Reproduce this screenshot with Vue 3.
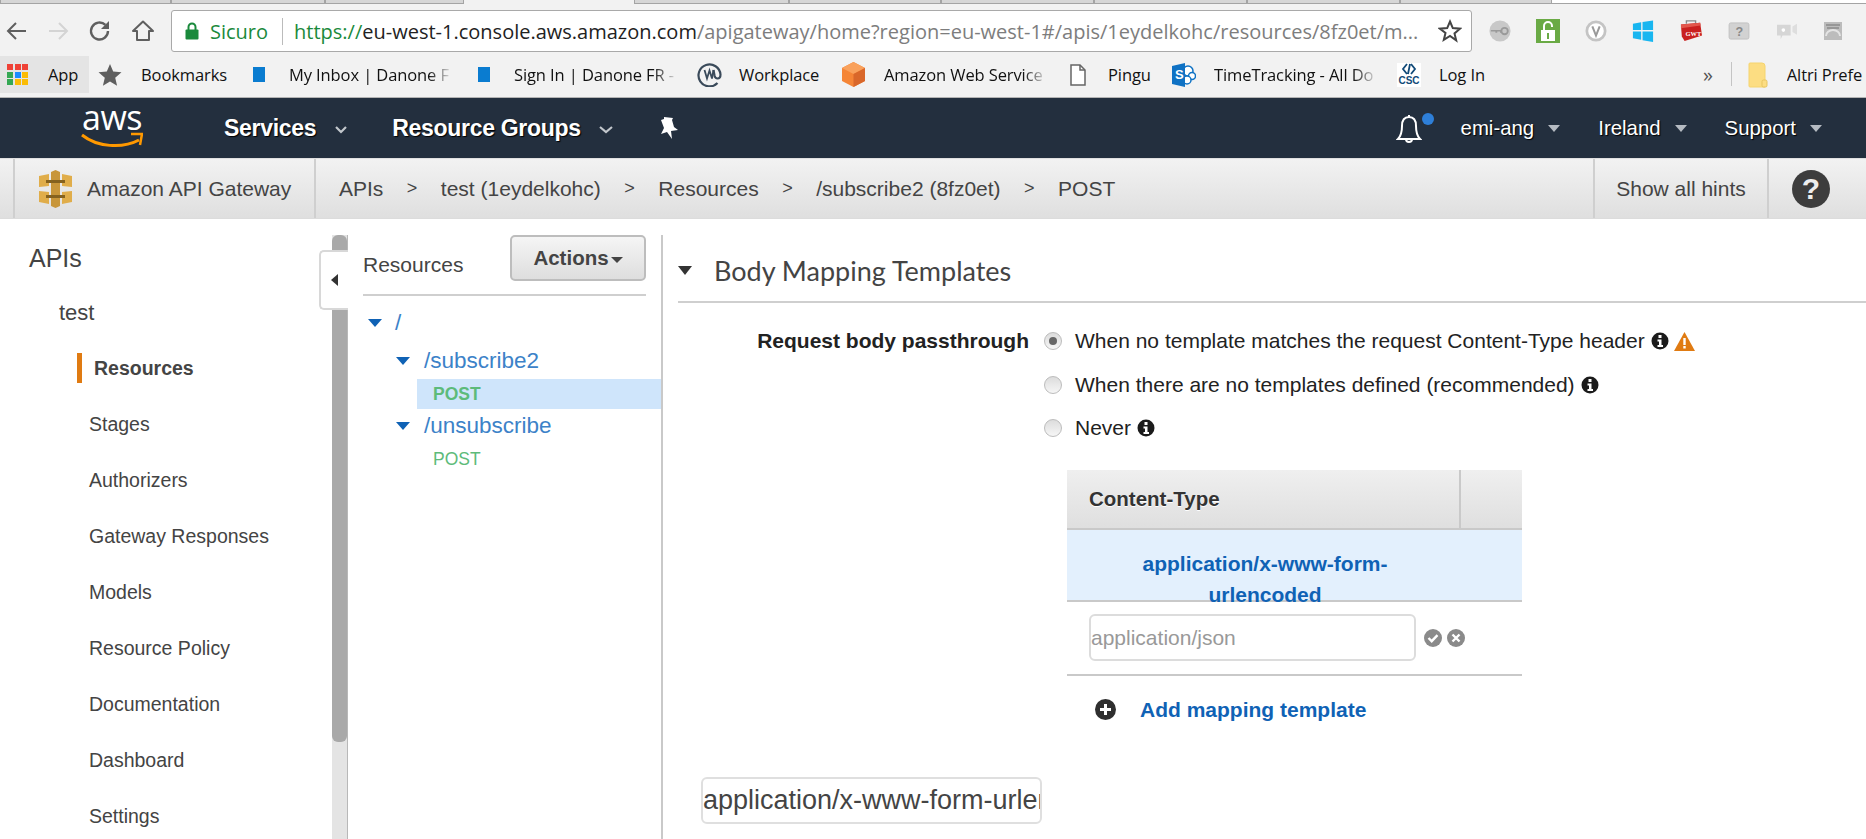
<template>
  <div class="page">
    <div class="tabstrip">
      <div v-for="(w, i) in tabWidths" :key="i" class="tab" :style="{ width: w + 'px' }"></div>
      <div class="tab active"></div>
      <div v-for="(w, i) in tabWidthsAfter" :key="'a' + i" class="tab" :style="{ width: w + 'px' }"></div>
      <div class="tab-rest"></div>
    </div>

    <div class="toolbar">
      <div class="nav-icons">
        <svg width="24" height="24" viewBox="0 0 24 24" class="tb-back"><path d="M21 12H4M11 4l-8 8 8 8" fill="none" stroke="#5f5f5f" stroke-width="2"/></svg>
        <svg width="24" height="24" viewBox="0 0 24 24" class="tb-forward"><path d="M3 12h17M13 4l8 8-8 8" fill="none" stroke="#d4d4d4" stroke-width="2"/></svg>
        <svg width="24" height="24" viewBox="0 0 24 24" class="tb-reload"><path d="M20 12a8.500 8.500 0 1 1-2.600-6.100" fill="none" stroke="#5f5f5f" stroke-width="2.400"/><path d="M21 2v8h-8z" fill="#5f5f5f"/></svg>
        <svg width="24" height="24" viewBox="0 0 24 24" class="tb-home"><path d="M2 12 12 2.500 22 12h-4v9H6v-9z" fill="none" stroke="#5f5f5f" stroke-width="2" stroke-linejoin="round"/></svg>
      </div>
      <div class="omnibox">
        <svg width="14" height="18" viewBox="0 0 14 18" class="lock"><path d="M3.500 8V5a3.500 3.500 0 0 1 7 0v3" fill="none" stroke="#1a8a3c" stroke-width="2"/><rect x="0.500" y="7.500" width="13" height="10" rx="1" fill="#1a8a3c"/></svg>
        <span class="secure">Sicuro</span>
        <span class="omni-sep"></span>
        <span class="url"><span class="scheme">https://</span><span class="host">eu-west-1.console.aws.amazon.com</span>/apigateway/home?region=eu-west-1#/apis/1eydelkohc/resources/8fz0et/m...</span>
        <svg width="24" height="24" viewBox="0 0 24 24" class="star"><path d="m12 2.500 2.800 6.600 7.200.6-5.500 4.700 1.700 7L12 17l-6.200 3.900 1.700-7L2 9.700l7.200-.6z" fill="none" stroke="#444" stroke-width="2"/></svg>
      </div>
      <div class="extensions">
        <svg width="22" height="22" viewBox="0 0 24 24"><circle cx="12" cy="12" r="11.500" fill="#c8c8c8"/><path d="M2 11h12v3h-2v-1.500H9V14H7v-1.500H2z" fill="#9a9a9a"/><circle cx="17" cy="12" r="3.500" fill="none" stroke="#9a9a9a" stroke-width="2"/></svg>
        <svg width="24" height="24" viewBox="0 0 24 24"><rect width="24" height="24" fill="#6aaa45"/><path d="M8 11V7a4 4 0 0 1 8 0v1" fill="none" stroke="#fff" stroke-width="2"/><rect x="5" y="11" width="14" height="11" fill="#fff"/><path d="M11 14h2v6h-2z" fill="#6aaa45"/></svg>
        <svg width="22" height="22" viewBox="0 0 24 24"><circle cx="12" cy="12" r="10" fill="#fff" stroke="#c4c4c4" stroke-width="3"/><path d="m8 7 4 10 4-10" fill="none" stroke="#9a9a9a" stroke-width="2.200"/></svg>
        <svg width="22" height="22" viewBox="0 0 24 24"><path d="m1 4 9-1.500V11H1zM11.500 2.300 23 .5V11H11.500zM1 12.500h9v9L1 20zM11.500 12.500H23V24l-11.500-2z" fill="#19b6f0"/></svg>
        <svg width="24" height="22" viewBox="0 0 26 24"><path d="M8 4V1h10v3" fill="none" stroke="#888" stroke-width="1.500"/><path d="m2 5 21-2 2 14-19 6-3-5z" fill="#c9201f"/><path d="m2 5 21-2 .5 3L2 9z" fill="#e2574c"/><text x="7" y="17" class="gwt">GWT</text></svg>
        <svg width="22" height="18" viewBox="0 0 22 20"><rect width="22" height="18" y="1" rx="2" fill="#d2d2d2" stroke="#c0c0c0"/><text x="7" y="15" class="help">?</text></svg>
        <svg width="24" height="20" viewBox="0 0 24 22"><path d="M1 4h15v12H7l-2 4v-4H1z" fill="#d6d6d6"/><path d="m18 6 5-3v12l-5-3z" fill="#dedede"/><circle cx="8" cy="10" r="2" fill="#fff"/></svg>
        <svg width="18" height="18" viewBox="0 0 18 18"><rect width="18" height="18" fill="#bcbcbc"/><path d="M2 3h14M3 6h12" stroke="#8a8a8a" stroke-width="1.500"/><path d="M2 14a7 6 0 0 1 14 0" fill="none" stroke="#e4e4e4" stroke-width="2"/></svg>
      </div>
    </div>

    <div class="bookmarks">
      <div class="bm bm-app">
        <span class="apps"><i v-for="(c, i) in appColors" :key="i" :style="{ background: c }"></i></span>
        <span class="bm-text">App</span>
      </div>
      <div class="bm bm-star">
        <svg width="24" height="24" viewBox="0 0 24 24"><path d="m12 1 3.200 7.600 8.300.7-6.300 5.400 1.900 8.100-7.100-4.300-7.100 4.300 1.900-8.100L.5 9.300l8.300-.7z" fill="#5f5f5f"/></svg>
        <span class="bm-text">Bookmarks</span>
      </div>
      <div class="bm bm-inbox">
        <span class="square"></span>
        <span class="bm-text fade">My Inbox | Danone F</span>
      </div>
      <div class="bm bm-signin">
        <span class="square"></span>
        <span class="bm-text fade">Sign In | Danone FR -</span>
      </div>
      <div class="bm bm-work">
        <svg width="25" height="25" viewBox="0 0 25 25"><path d="M20.500 21A11 11 0 1 1 23.500 12.500c0 2.500-1.200 4-3 4-1.500 0-2.500-1-3-3L16.500 8" fill="none" stroke="#3a4a5a" stroke-width="2.200"/><path d="m7.500 8 2.500 8.500 2.500-8 2.500 8 1.500-8.500" fill="none" stroke="#3a4a5a" stroke-width="1.800"/></svg>
        <span class="bm-text">Workplace</span>
      </div>
      <div class="bm bm-amazon">
        <svg width="25" height="25" viewBox="0 0 25 25"><path d="M12.500 0 24 6v13l-11.500 6L1 19V6z" fill="#f58536"/><path d="M12.500 0 24 6l-11.500 6L1 6z" fill="#f9a15c"/><path d="M12.500 12 24 6v13l-11.500 6z" fill="#d9672a"/></svg>
        <span class="bm-text fade">Amazon Web Service</span>
      </div>
      <div class="bm bm-pingu">
        <svg width="16" height="22" viewBox="0 0 16 22"><path d="M1 1h9l5 5v15H1z" fill="#fff" stroke="#666" stroke-width="1.500"/><path d="M10 1v5h5" fill="none" stroke="#666" stroke-width="1.500"/></svg>
        <span class="bm-text">Pingu</span>
      </div>
      <div class="bm bm-time">
        <svg width="24" height="24" viewBox="0 0 24 24"><circle cx="16" cy="8" r="5" fill="#fff" stroke="#0f72c4" stroke-width="1.500"/><circle cx="20" cy="13" r="3.500" fill="#fff" stroke="#0f72c4" stroke-width="1.500"/><circle cx="15" cy="17" r="4" fill="#fff" stroke="#0f72c4" stroke-width="1.500"/><path d="M0 3 13 0v24L0 21z" fill="#0f72c4"/><text x="3" y="16" class="sp">S</text></svg>
        <span class="bm-text fade">TimeTracking - All Do</span>
      </div>
      <div class="bm bm-login">
        <span class="csc"><svg width="18" height="12" viewBox="0 0 18 12"><path d="M7 1 3 6l4 5M11 1l4 5-4 5M10 1 8 11" fill="none" stroke="#114a78" stroke-width="1.800"/></svg><b>CSC</b></span>
        <span class="bm-text">Log In</span>
      </div>
      <span class="more">»</span>
      <span class="bm-sep"></span>
      <div class="bm bm-other">
        <svg width="20" height="26" viewBox="0 0 20 26"><path d="M2 1h12a3 3 0 0 1 3 3v21H2a1 1 0 0 1-1-1V2a1 1 0 0 1 1-1z" fill="#fcdd82" stroke="#f5d46f"/><rect x="14" y="18" width="5" height="7" rx="1.500" fill="#fcdd82" stroke="#e7c45f"/></svg>
        <span class="bm-text">Altri Prefe</span>
      </div>
    </div>

    <header class="aws-nav">
      <div class="logo">
        <span class="logo-text">aws</span>
        <svg width="62" height="17" viewBox="0 0 62 17" class="smile"><path d="M1 3c15 12 40 14 57 5" fill="none" stroke="#f90" stroke-width="3"/><path d="M50 2 61 2 59 13" fill="none" stroke="#f90" stroke-width="2.500"/></svg>
      </div>
      <span class="menu services">Services</span>
      <svg width="12" height="8" viewBox="0 0 12 8" class="chev first"><path d="m1 1 5 5 5-5" fill="none" stroke="#c2c7cc" stroke-width="2.200"/></svg>
      <span class="menu groups">Resource Groups</span>
      <svg width="14" height="8" viewBox="0 0 14 8" class="chev second"><path d="m1 1 6 5 6-5" fill="none" stroke="#c2c7cc" stroke-width="2.200"/></svg>
      <svg width="20" height="24" viewBox="0 0 20 24" class="pin"><path d="M5 1l9 1-1 2 2 7 4 3-7 1 1 8-5-7-6 2 3-6-3-8 3-1z" fill="#fff"/></svg>
      <div class="nav-right">
        <span class="bell-wrap">
          <svg width="26" height="32" viewBox="0 0 26 32"><path d="M13 3c-5 0-7 4-7 9 0 6-1 10-4 13h22c-3-3-4-7-4-13 0-5-2-9-7-9zM10 25a3 3 0 0 0 6 0M13 1v2" fill="none" stroke="#fff" stroke-width="2"/></svg>
          <span class="dot"></span>
        </span>
        <span class="user">emi-ang</span><span class="caret"></span>
        <span class="user ireland">Ireland</span><span class="caret"></span>
        <span class="user support">Support</span><span class="caret"></span>
      </div>
    </header>

    <div class="subbar">
      <div class="service">
        <svg width="33" height="38" viewBox="0 0 33 38"><path d="M0 6l10-2v12L0 17zM23 4l10 2v11l-10-1zM0 21l10 1v12L0 32zM23 22l10-1v11l-10 2z" fill="#e0ad4a"/><path d="M12 2 16.500 0 21 2v34l-4.500 2-4.500-2z" fill="#c8963a"/><path d="M7 10h19v3H7zM7 25h19v3H7z" fill="#85621f"/></svg>
        <span>Amazon API Gateway</span>
      </div>
      <nav class="crumbs">
        <span>APIs</span><i>&gt;</i><span>test (1eydelkohc)</span><i>&gt;</i><span>Resources</span><i>&gt;</i><span>/subscribe2 (8fz0et)</span><i>&gt;</i><span>POST</span>
      </nav>
      <div class="hints">Show all hints</div>
      <div class="help-cell"><span class="help-circle">?</span></div>
    </div>

    <main class="workspace">
      <aside class="sidenav">
        <div class="side-title">APIs</div>
        <div class="side-api">test</div>
        <ul class="side-list">
          <li v-for="item in sideItems" :key="item" :class="{ current: item === 'Resources' }">{{ item }}</li>
        </ul>
      </aside>
      <div class="side-scroll"><div class="thumb"></div></div>

      <section class="resources">
        <button class="collapse"><span></span></button>
        <div class="res-head">
          <span class="res-title">Resources</span>
          <button class="actions">Actions<span class="act-caret"></span></button>
        </div>
        <div class="tree">
          <div class="node root"><span class="tri"></span><a>/</a></div>
          <div class="node"><span class="tri"></span><a>/subscribe2</a></div>
          <div class="method selected">POST</div>
          <div class="node"><span class="tri"></span><a>/unsubscribe</a></div>
          <div class="method">POST</div>
        </div>
      </section>

      <section class="detail">
        <h2 class="detail-title"><span class="tri-dark"></span>Body Mapping Templates</h2>
        <div class="pass-row">
          <div class="pass-label">Request body passthrough</div>
          <div class="options">
            <label v-for="opt in options" :key="opt.text" class="option">
              <span class="radio" :class="{ on: opt.on }"></span>
              <span>{{ opt.text }}</span>
              <svg width="18" height="18" viewBox="0 0 18 18" class="info"><circle cx="9" cy="9" r="8.500" fill="#1b1b1b"/><rect x="7.500" y="3" width="3" height="3" fill="#fff"/><path d="M6.500 7.500h4V13H12v2H6.500v-2H8V9.500H6.500z" fill="#fff"/></svg>
              <svg v-if="opt.on" width="21" height="19" viewBox="0 0 21 19" class="warn"><path d="M10.500 0 21 19H0z" fill="#e07b12"/><rect x="9.300" y="6" width="2.400" height="7" fill="#fff"/><rect x="9.300" y="14" width="2.400" height="2.500" fill="#fff"/></svg>
            </label>
          </div>
        </div>

        <div class="mapping">
          <div class="map-head">
            <span class="map-col">Content-Type</span>
            <span class="map-end"></span>
          </div>
          <div class="map-row">application/x-www-form-<br>urlencoded</div>
          <div class="map-new">
            <input class="type-input" placeholder="application/json" />
            <svg width="18" height="18" viewBox="0 0 18 18" class="mini"><circle cx="9" cy="9" r="9" fill="#8a8a8a"/><path d="m4.500 9 3.200 3.200 5.800-6" fill="none" stroke="#fff" stroke-width="2.400"/></svg>
            <svg width="18" height="18" viewBox="0 0 18 18" class="mini"><circle cx="9" cy="9" r="9" fill="#8a8a8a"/><path d="m5.500 5.500 7 7m0-7-7 7" fill="none" stroke="#fff" stroke-width="2.400"/></svg>
          </div>
          <div class="map-add">
            <svg width="21" height="21" viewBox="0 0 21 21"><circle cx="10.500" cy="10.500" r="10.500" fill="#2f2f2f"/><path d="M10.500 5v11M5 10.500h11" stroke="#fff" stroke-width="3"/></svg>
            <a>Add mapping template</a>
          </div>
        </div>

        <input class="big-input" value="application/x-www-form-urlencoded" />
      </section>
    </main>
  </div>
</template>

<script setup>
const tabWidths = [171, 154, 139]
const tabWidthsAfter = [155, 152, 153, 153, 153, 152]
const appColors = ['#ef4136', '#ef4136', '#ef4136', '#34a853', '#1a8cff', '#fbbc05', '#34a853', '#fbbc05', '#fbbc05']
const sideItems = ['Resources', 'Stages', 'Authorizers', 'Gateway Responses', 'Models', 'Resource Policy', 'Documentation', 'Dashboard', 'Settings']
const options = [
  { text: 'When no template matches the request Content-Type header', on: true },
  { text: 'When there are no templates defined (recommended)', on: false },
  { text: 'Never', on: false }
]
</script>

<style>
html, body { margin: 0; overflow: hidden; background: #fff; }
</style>

<style scoped>
.page {
  width: 1866px;
  height: 839px;
  overflow: hidden;
  font-family: "Liberation Sans", Arial, sans-serif;
  color: #444;
  display: flex;
  flex-direction: column;
}

/* browser chrome */
.tabstrip {
  height: 10px;
  display: flex;
  background: #f2f2f2;
  flex: none;
}
.tab {
  height: 4px;
  background: #d6d6d6;
  border: 1px solid #a4a4a4;
  border-top: none;
  box-sizing: border-box;
}
.tab.active {
  width: 170px;
  background: #f2f2f2;
  border: none;
}
.tab-rest {
  flex: 1;
  height: 4px;
  box-sizing: border-box;
  background: #fff;
  border-bottom: 1px solid #a4a4a4;
}
.toolbar {
  height: 46px;
  background: #f2f2f2;
  display: flex;
  flex: none;
}
.nav-icons {
  width: 171px;
  display: flex;
  align-items: center;
  height: 42px;
}
.tb-back { margin-left: 5px; }
.tb-forward { margin-left: 17px; }
.tb-reload { margin-left: 18px; }
.tb-home { margin-left: 19px; }
.omnibox {
  width: 1301px;
  height: 42px;
  box-sizing: border-box;
  background: #fff;
  border: 1px solid #a9a9a9;
  border-radius: 3px;
  display: flex;
  align-items: center;
  padding-left: 13px;
  font-family: "Open Sans", sans-serif;
  font-size: 20px;
  white-space: nowrap;
}
.secure { color: #1a8a3c; margin-left: 11px; }
.omni-sep { width: 1px; height: 27px; background: #bbb; margin: 0 11px 0 14px; }
.url { color: #7d7d7d; flex: 1; }
.scheme { color: #1a8a3c; }
.host { color: #222; }
.star { margin-right: 9px; }
.extensions {
  height: 42px;
  display: flex;
  align-items: center;
  flex: 1;
  padding-left: 17px;
  gap: 25px;
}
.gwt { font: bold 7px "Liberation Serif", serif; fill: #fff; }
.help { font: bold 14px "Liberation Sans", sans-serif; fill: #888; }
.sp { font: bold 13px "Liberation Sans", sans-serif; fill: #fff; }

.bookmarks {
  height: 41px;
  background: #f2f2f2;
  border-bottom: 1px solid #b4b4b4;
  display: flex;
  align-items: flex-start;
  flex: none;
  font-family: "Open Sans", sans-serif;
  font-size: 16.500px;
  color: #111;
  letter-spacing: -0.1px;
}
.bm {
  display: flex;
  align-items: center;
  height: 37px;
  white-space: nowrap;
  flex: none;
}
.bm-text { display: block; overflow: hidden; }
.fade {
  width: 164px;
  -webkit-mask-image: linear-gradient(90deg, #000 85%, transparent);
  mask-image: linear-gradient(90deg, #000 85%, transparent);
}
.bm-app { width: 89px; background: #e4e4e4; box-sizing: border-box; padding-left: 7px; gap: 20px; }
.apps { display: grid; grid-template-columns: repeat(3, 6px); gap: 1.500px; }
.apps i { width: 6px; height: 6px; display: block; }
.bm-star { margin-left: 9px; gap: 19px; width: 155px; }
.square { width: 12px; height: 15px; background: #0a7cd0; flex: none; }
.bm-inbox { gap: 24px; width: 225px; }
.bm-signin { gap: 24px; width: 219px; }
.bm-work { gap: 17px; width: 144px; }
.bm-amazon { gap: 18px; width: 229px; }
.bm-pingu { gap: 22px; width: 102px; }
.bm-time { gap: 18px; width: 225px; }
.bm-login { gap: 18px; }
.more { margin-left: 218px; font-size: 20px; line-height: 37px; color: #555; flex: none; }
.csc {
  width: 24px;
  height: 24px;
  background: #fff;
  display: flex;
  flex-direction: column;
  align-items: center;
  line-height: 10px;
}
.csc b { font: bold 10px "Liberation Sans", sans-serif; color: #114a78; }
.bm-sep { width: 1px; height: 24px; background: #c4c4c4; margin: 6px 16px 0 18px; flex: none; }
.bm-other { gap: 19px; }

/* aws bar */
.aws-nav {
  height: 60px;
  background: #232f3e;
  display: flex;
  align-items: center;
  flex: none;
  color: #fff;
  position: relative;
}
.logo {
  width: 62px;
  margin-left: 81px;
  height: 60px;
  display: flex;
  flex-direction: column;
  align-items: center;
}
.logo-text {
  font-family: "Open Sans", sans-serif;
  font-size: 34px;
  line-height: 32px;
  margin-top: 3px;
  letter-spacing: -0.5px;
}
.smile { margin-top: -1px; }
.menu {
  font-weight: bold;
  font-size: 23px;
  text-shadow: 1px 1px 1px #000;
  letter-spacing: -0.3px;
}
.services { margin-left: 81px; }
.chev { margin-top: 4px; }
.chev.first { margin-left: 19px; }
.groups { margin-left: 45px; }
.chev.second { margin-left: 18px; }
.pin { margin-left: 46px; }
.nav-right {
  margin-left: auto;
  display: flex;
  align-items: center;
  font-size: 20.400px;
}
.bell-wrap { position: relative; display: block; width: 26px; height: 32px; margin-top: 4px; }
.dot {
  position: absolute;
  left: 26px;
  top: -1px;
  width: 12px;
  height: 12px;
  border-radius: 50%;
  background: #2e7fd8;
}
.user { margin-left: 39px; text-shadow: 1px 1px 1px #000; }
.ireland { margin-left: 38px; }
.support { margin-left: 38px; }
.caret {
  margin-left: 14px;
  border: 6px solid transparent;
  border-top: 7px solid #b5bbc2;
  border-bottom: none;
}
.nav-right .caret:last-child { margin-right: 44px; }

/* service bar */
.subbar {
  height: 61px;
  flex: none;
  display: flex;
  align-items: center;
  background: linear-gradient(#f2f2f2, #dfdfdf);
  border-top: 1px solid #e0e0e0;
  border-bottom: 1px solid #dcdcdc;
  box-sizing: border-box;
  font-size: 21px;
  color: #444;
  white-space: nowrap;
}
.service {
  margin-left: 13px;
  width: 303px;
  height: 100%;
  box-sizing: border-box;
  border-left: 2px solid #cfcfcf;
  border-right: 2px solid #cfcfcf;
  display: flex;
  align-items: center;
  padding-left: 24px;
  gap: 15px;
}
.crumbs {
  display: flex;
  align-items: center;
  flex: 1;
  padding-left: 23px;
}
.crumbs i { font-style: normal; margin: 0 22.750px; width: 12px; text-align: center; font-size: 18px; }
.hints {
  width: 176px;
  height: 100%;
  box-sizing: border-box;
  border-left: 2px solid #cfcfcf;
  border-right: 2px solid #cfcfcf;
  display: flex;
  align-items: center;
  justify-content: center;
}
.help-cell { width: 97px; display: flex; }
.help-circle {
  width: 38px;
  height: 38px;
  margin-left: 23px;
  border-radius: 50%;
  background: #3d3d3d;
  color: #eee;
  font: bold 30px/38px "Liberation Sans", sans-serif;
  text-align: center;
}

/* body */
.workspace {
  flex: 1;
  display: flex;
  min-height: 0;
  background: #fff;
}
.sidenav {
  width: 332px;
  flex: none;
  padding-left: 29px;
  box-sizing: border-box;
  color: #444;
}
.side-title { font-size: 25px; margin-top: 26px; line-height: 26px; }
.side-api { font-size: 22px; margin: 30px 0 0 30px; line-height: 24px; }
.side-list {
  list-style: none;
  margin: 15px 0 0 60px;
  padding: 0;
  font-size: 19.500px;
}
.side-list li { height: 56px; line-height: 56px; white-space: nowrap; }
.side-list .current {
  font-weight: bold;
  margin-left: -12px;
  position: relative;
  padding-left: 17px;
}
.side-list .current::before {
  content: "";
  position: absolute;
  left: 0;
  top: 13px;
  width: 5px;
  height: 30px;
  background: #e07b12;
}
.side-scroll {
  width: 15px;
  flex: none;
  margin-top: 16px;
  background: #e4e4e4;
  border-right: 1px solid #b8b8b8;
}
.thumb {
  height: 507px;
  background: #a9a9a9;
  border-radius: 6px;
}
.resources {
  width: 315px;
  flex: none;
  box-sizing: border-box;
  position: relative;
  border-right: 2px solid #c9c9c9;
  margin-top: 16px;
}
.collapse {
  position: absolute;
  left: -29px;
  top: 15px;
  width: 29px;
  height: 60px;
  box-sizing: border-box;
  background: #fff;
  border: 2px solid #d8d8d8;
  border-right: none;
  border-radius: 5px 0 0 5px;
  padding: 0;
  display: flex;
  align-items: center;
  justify-content: center;
}
.collapse span {
  border: 6px solid transparent;
  border-left: none;
  border-right: 7px solid #333;
}
.res-head {
  margin: 0 15px 0 15px;
  height: 59px;
  box-sizing: content-box;
  border-bottom: 2px solid #cfcfcf;
  display: flex;
  align-items: flex-start;
  justify-content: space-between;
}
.res-title { font-size: 21px; margin-top: 18px; color: #444; }
.actions {
  width: 136px;
  height: 46px;
  box-sizing: border-box;
  border: 2px solid #bdbdbd;
  border-radius: 5px;
  background: linear-gradient(#f5f5f5, #dedede);
  font: bold 20.500px "Liberation Sans", sans-serif;
  color: #444;
  padding: 0;
}
.act-caret {
  display: inline-block;
  margin-left: 2px;
  vertical-align: middle;
  border: 6px solid transparent;
  border-top: 6px solid #444;
  border-bottom: none;
}
.tree { font-size: 22.500px; padding-top: 6px; }
.node {
  display: flex;
  align-items: center;
  height: 35px;
  box-sizing: border-box;
  padding: 0 0 2px 48px;
  gap: 14px;
}
.node.root { padding: 0 0 0 20px; height: 42px; gap: 13px; }
.node a { color: #3c82c8; }
.tri {
  width: 0;
  height: 0;
  border-left: 7px solid transparent;
  border-right: 7px solid transparent;
  border-top: 8px solid #0f62b5;
}
.method {
  margin-left: 69px;
  padding-left: 16px;
  height: 30px;
  line-height: 30px;
  font-size: 17.500px;
  color: #5dbb7a;
}
.method.selected { background: #cfe5fb; font-weight: bold; }
.detail {
  flex: 1;
  min-width: 0;
  padding-left: 15px;
  position: relative;
}
.detail-title {
  margin: 0;
  height: 84px;
  box-sizing: border-box;
  border-bottom: 2px solid #cfcfcf;
  font-family: Lato, sans-serif;
  font-weight: 400;
  font-size: 27px;
  color: #444;
  display: flex;
  align-items: center;
  padding-top: 20px;
}
.tri-dark {
  width: 0;
  height: 0;
  margin-right: 22px;
  border-left: 7.500px solid transparent;
  border-right: 7.500px solid transparent;
  border-top: 9px solid #333;
}
.pass-row { display: flex; margin-top: 23px; font-size: 21px; }
.pass-label { width: 351px; text-align: right; font-weight: bold; color: #222; line-height: 30px; flex: none; white-space: nowrap; }
.options { margin-left: 15px; }
.option {
  display: flex;
  align-items: center;
  height: 30px;
  margin-bottom: 13.500px;
  color: #222;
  white-space: nowrap;
}
.radio {
  width: 18px;
  height: 18px;
  box-sizing: border-box;
  border-radius: 50%;
  border: 1px solid #bcbcbc;
  background: linear-gradient(#dcdcdc, #f6f6f6);
  margin-right: 13px;
  display: flex;
  align-items: center;
  justify-content: center;
}
.radio.on::after {
  content: "";
  width: 8px;
  height: 8px;
  border-radius: 50%;
  background: #666;
}
.info { margin-left: 6px; }
.warn { margin-left: 5px; }
.mapping { width: 455px; margin: 13px 0 0 389px; font-size: 21px; }
.map-head {
  height: 60px;
  box-sizing: border-box;
  background: linear-gradient(#efefef, #dfdfdf);
  border-bottom: 2px solid #c9c9c9;
  display: flex;
  align-items: center;
}
.map-col {
  width: 394px;
  height: 100%;
  box-sizing: border-box;
  padding-left: 22px;
  display: flex;
  align-items: center;
  border-right: 2px solid #c9c9c9;
  font-weight: bold;
  font-size: 20.500px;
  color: #333;
  text-shadow: 0 1px 0 #fff;
}
.map-row {
  height: 72px;
  box-sizing: border-box;
  background: #e3f0fd;
  border-bottom: 2px solid #c9c9c9;
  padding-top: 18px;
  padding-right: 59px;
  text-align: center;
  line-height: 31px;
  font-weight: bold;
  color: #0f62b5;
  width: 100%;
}
.map-new {
  height: 74px;
  box-sizing: border-box;
  border-bottom: 2px solid #c9c9c9;
  display: flex;
  align-items: center;
  padding: 0 0 0 22px;
  gap: 5px;
}
.type-input {
  width: 327px;
  height: 47px;
  box-sizing: border-box;
  border: 2px solid #dcdcdc;
  border-radius: 6px;
  font: 21px "Liberation Sans", sans-serif;
  padding: 0;
  margin-right: 3px;
  outline: none;
  background: #fff;
}
.type-input::placeholder { color: #999; }
.map-add {
  display: flex;
  align-items: center;
  padding: 22px 0 0 28px;
  gap: 24px;
  font-weight: bold;
  color: #0f62b5;
}
.big-input {
  position: absolute;
  left: 38px;
  top: 558px;
  width: 341px;
  height: 47px;
  box-sizing: border-box;
  border: 2px solid #dfdfdf;
  border-radius: 6px;
  background: #fff;
  font: 27px "Liberation Sans", sans-serif;
  color: #444;
  padding: 0;
  outline: none;
}
</style>
